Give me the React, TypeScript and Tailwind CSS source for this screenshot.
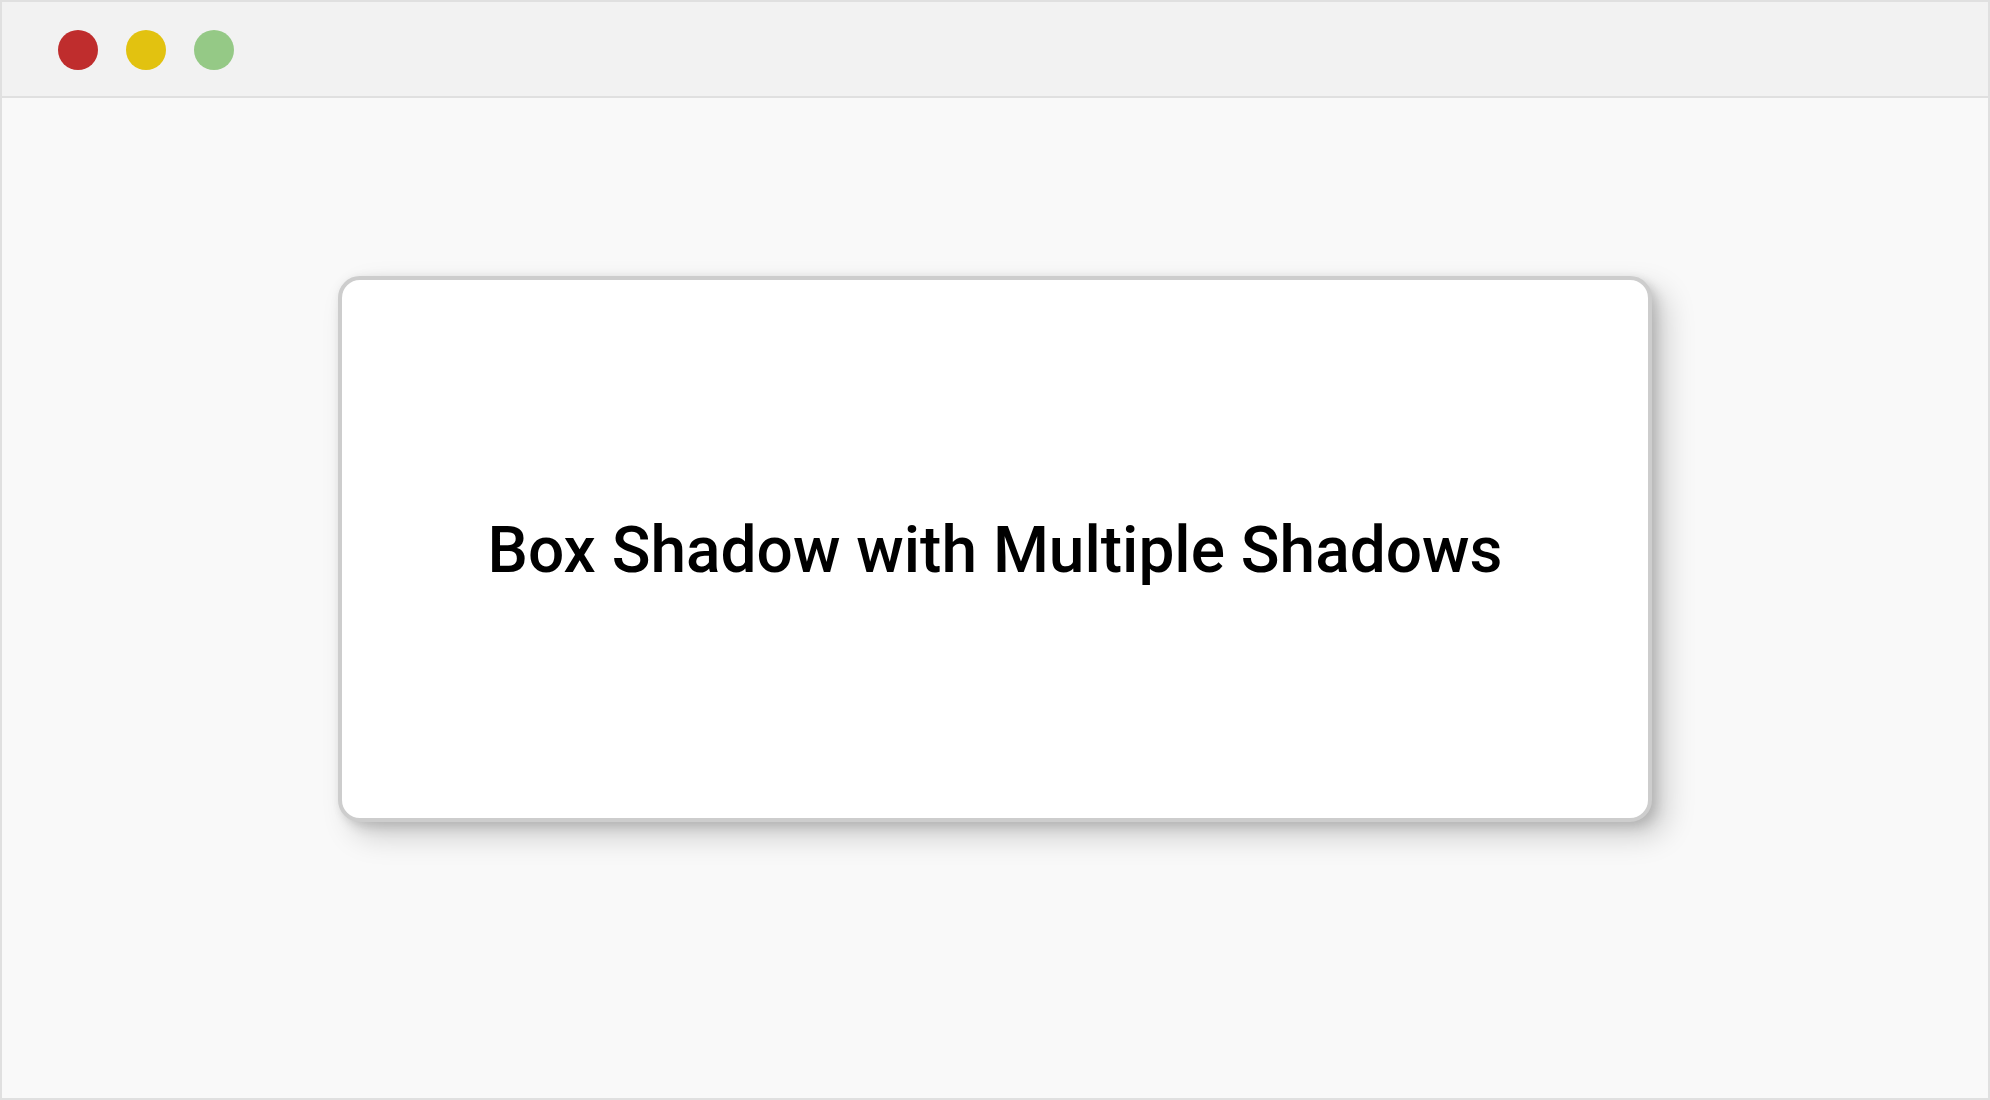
export default function App() {
  return (
    <div className="w-[1990px] h-[1100px] border-2 border-[#e0e0e0] bg-[#f9f9f9] flex flex-col font-['Roboto',sans-serif]">
      {/* window bar */}
      <div className="h-[96px] shrink-0 bg-[#f2f2f2] border-b-2 border-[#e0e0e0] flex items-center gap-[28px] pl-[56px] pt-[2px]">
        <span className="w-10 h-10 rounded-full bg-[#bf2d2d]" />
        <span className="w-10 h-10 rounded-full bg-[#e2c210]" />
        <span className="w-10 h-10 rounded-full bg-[#95c986]" />
      </div>
      <div className="flex-1 flex justify-center pt-[178px]">
        <div className="w-[1314px] h-[546px] bg-white border-4 border-[#cdcdcd] rounded-[22px] flex items-center justify-center pt-[4px] shadow-[14px_14px_30px_rgba(0,0,0,0.18),6px_6px_12px_rgba(0,0,0,0.12),0_0_10px_rgba(0,0,0,0.05)]">
          <h1 className="text-[64px] leading-none font-medium text-black">
            Box Shadow with Multiple Shadows
          </h1>
        </div>
      </div>
    </div>
  );
}
